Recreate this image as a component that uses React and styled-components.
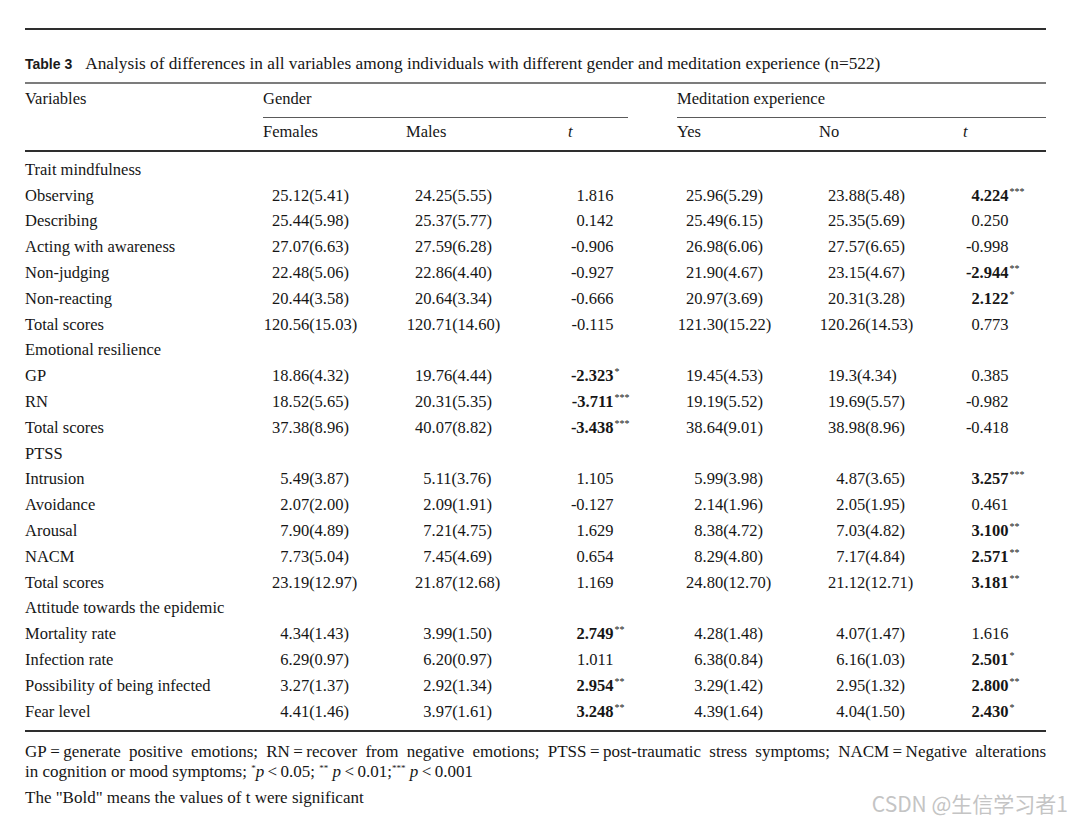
import React from 'react';
import styled, { createGlobalStyle } from 'styled-components';

const GlobalStyle = createGlobalStyle`
  html, body {
    margin: 0;
    padding: 0;
    background: #ffffff;
  }
  body {
    font-family: 'Liberation Serif', 'Times New Roman', serif;
    color: #161616;
  }
`;

// 표 데이터: t 값 뒤의 * 는 유의한 값 (굵게 표시)
const sections = [
  {
    title: 'Trait mindfulness',
    rows: [
      ['Observing', '25.12(5.41)', '24.25(5.55)', '1.816', '25.96(5.29)', '23.88(5.48)', '4.224***'],
      ['Describing', '25.44(5.98)', '25.37(5.77)', '0.142', '25.49(6.15)', '25.35(5.69)', '0.250'],
      ['Acting with awareness', '27.07(6.63)', '27.59(6.28)', '-0.906', '26.98(6.06)', '27.57(6.65)', '-0.998'],
      ['Non-judging', '22.48(5.06)', '22.86(4.40)', '-0.927', '21.90(4.67)', '23.15(4.67)', '-2.944**'],
      ['Non-reacting', '20.44(3.58)', '20.64(3.34)', '-0.666', '20.97(3.69)', '20.31(3.28)', '2.122*'],
      ['Total scores', '120.56(15.03)', '120.71(14.60)', '-0.115', '121.30(15.22)', '120.26(14.53)', '0.773'],
    ],
  },
  {
    title: 'Emotional resilience',
    rows: [
      ['GP', '18.86(4.32)', '19.76(4.44)', '-2.323*', '19.45(4.53)', '19.3(4.34)', '0.385'],
      ['RN', '18.52(5.65)', '20.31(5.35)', '-3.711***', '19.19(5.52)', '19.69(5.57)', '-0.982'],
      ['Total scores', '37.38(8.96)', '40.07(8.82)', '-3.438***', '38.64(9.01)', '38.98(8.96)', '-0.418'],
    ],
  },
  {
    title: 'PTSS',
    rows: [
      ['Intrusion', '5.49(3.87)', '5.11(3.76)', '1.105', '5.99(3.98)', '4.87(3.65)', '3.257***'],
      ['Avoidance', '2.07(2.00)', '2.09(1.91)', '-0.127', '2.14(1.96)', '2.05(1.95)', '0.461'],
      ['Arousal', '7.90(4.89)', '7.21(4.75)', '1.629', '8.38(4.72)', '7.03(4.82)', '3.100**'],
      ['NACM', '7.73(5.04)', '7.45(4.69)', '0.654', '8.29(4.80)', '7.17(4.84)', '2.571**'],
      ['Total scores', '23.19(12.97)', '21.87(12.68)', '1.169', '24.80(12.70)', '21.12(12.71)', '3.181**'],
    ],
  },
  {
    title: 'Attitude towards the epidemic',
    rows: [
      ['Mortality rate', '4.34(1.43)', '3.99(1.50)', '2.749**', '4.28(1.48)', '4.07(1.47)', '1.616'],
      ['Infection rate', '6.29(0.97)', '6.20(0.97)', '1.011', '6.38(0.84)', '6.16(1.03)', '2.501*'],
      ['Possibility of being infected', '3.27(1.37)', '2.92(1.34)', '2.954**', '3.29(1.42)', '2.95(1.32)', '2.800**'],
      ['Fear level', '4.41(1.46)', '3.97(1.61)', '3.248**', '4.39(1.64)', '4.04(1.50)', '2.430*'],
    ],
  },
];

const MeanValue = ({ value }) => {
  const dot = value.indexOf('.');
  return (
    <MeanCell>
      <IntPart>{value.slice(0, dot)}</IntPart>
      {value.slice(dot)}
    </MeanCell>
  );
};

const TValue = ({ value }) => {
  const stars = (value.match(/\*+$/) || [''])[0];
  const num = value.replace(/\*+$/, '');
  return (
    <TCell>
      <TNumber $bold={stars.length > 0}>{num}</TNumber>
      {stars && <Stars>{stars}</Stars>}
    </TCell>
  );
};

const App = () => {
  return (
    <>
      <GlobalStyle />
      <Page>
        <TopRule />

        <Caption>
          <CaptionLabel>Table 3</CaptionLabel>
          <CaptionText>
            Analysis of differences in all variables among individuals with different gender and meditation
            experience (n=522)
          </CaptionText>
        </Caption>

        <HeadGrid>
          <HeadCell>Variables</HeadCell>
          <GroupCell $span={3} $trim={49}>Gender</GroupCell>
          <GroupCell $span={3}>Meditation experience</GroupCell>

          <SubCell />
          <SubCell>Females</SubCell>
          <SubCell>Males</SubCell>
          <SubCell><em>t</em></SubCell>
          <SubCell>Yes</SubCell>
          <SubCell>No</SubCell>
          <SubCell><em>t</em></SubCell>
        </HeadGrid>

        <BodyGrid>
          {sections.map((section) => (
            <React.Fragment key={section.title}>
              <SectionTitle>{section.title}</SectionTitle>
              {section.rows.map((row) => (
                <React.Fragment key={section.title + row[0]}>
                  <VarCell>{row[0]}</VarCell>
                  <MeanValue value={row[1]} />
                  <MeanValue value={row[2]} />
                  <TValue value={row[3]} />
                  <MeanValue value={row[4]} />
                  <MeanValue value={row[5]} />
                  <TValue value={row[6]} />
                </React.Fragment>
              ))}
            </React.Fragment>
          ))}
        </BodyGrid>

        <Footnote>
          <JustifiedLine>
            GP{'\u2009'}={'\u2009'}generate positive emotions; RN{'\u2009'}={'\u2009'}recover from negative emotions;
            PTSS{'\u2009'}={'\u2009'}post-traumatic stress symptoms; NACM{'\u2009'}={'\u2009'}Negative alterations
          </JustifiedLine>
          <NoteLine>
            in cognition or mood symptoms; <NoteStar>*</NoteStar><em>p</em>{'\u2009'}&lt;{'\u2009'}0.05;{' '}
            <NoteStar>**</NoteStar> <em>p</em>{'\u2009'}&lt;{'\u2009'}0.01;<NoteStar>***</NoteStar>{' '}
            <em>p</em>{'\u2009'}&lt;{'\u2009'}0.001
          </NoteLine>
          <BoldNote>The "Bold" means the values of t were significant</BoldNote>
        </Footnote>

        <Watermark>CSDN @生信学习者1</Watermark>
      </Page>
    </>
  );
};

export default App;

// 스타일 컴포넌트
const COLUMNS = '238px 143px 162px 109px 142px 144px 83px';

const Page = styled.div`
  position: relative;
  width: 1072px;
  height: 822px;
  padding: 28px 26px 0 25px;
  box-sizing: border-box;
  overflow: hidden;
  font-size: 16.5px;
`;

const TopRule = styled.div`
  height: 2px;
  background: #2e2e2e;
`;

const Caption = styled.div`
  display: flex;
  align-items: baseline;
  gap: 13px;
  margin: 24px 0 8px;
  line-height: 20px;
`;

const CaptionLabel = styled.span`
  font-family: 'Liberation Sans', Arial, sans-serif;
  font-weight: bold;
  font-size: 14px;
  color: #1b1b1b;
`;

const CaptionText = styled.span`
  font-size: 17.3px;
  white-space: nowrap;
`;

const HeadGrid = styled.div`
  display: grid;
  grid-template-columns: ${COLUMNS};
  border-top: 2px solid #7c7c7c;
  border-bottom: 2px solid #2e2e2e;
  line-height: 20px;
`;

const HeadCell = styled.div`
  padding: 5px 0 8px;
`;

const GroupCell = styled.div`
  grid-column: span ${(p) => p.$span};
  margin-right: ${(p) => p.$trim || 0}px;
  padding: 5px 0 8px;
  border-bottom: 1px solid #5a5a5a;
`;

const SubCell = styled.div`
  padding: 4px 0 8px;

  em {
    font-style: italic;
  }
`;

const BodyGrid = styled.div`
  display: grid;
  grid-template-columns: ${COLUMNS};
  grid-auto-rows: 25.8px;
  align-items: center;
  padding: 5px 0;
  border-bottom: 2px solid #2e2e2e;
  line-height: 20px;
`;

const SectionTitle = styled.div`
  grid-column: 1 / -1;
`;

const VarCell = styled.div`
  white-space: nowrap;
`;

const MeanCell = styled.div`
  white-space: nowrap;
`;

const IntPart = styled.span`
  display: inline-block;
  width: 25.5px;
  text-align: right;
`;

const TCell = styled.div`
  white-space: nowrap;
`;

const TNumber = styled.span`
  display: inline-block;
  width: 45.5px;
  text-align: right;
  font-weight: ${(p) => (p.$bold ? 'bold' : 'normal')};
`;

const Stars = styled.span`
  font-size: 10px;
  line-height: 0;
  vertical-align: 6px;
  margin-left: 1px;
`;

const Footnote = styled.div`
  margin-top: 10px;
  font-size: 17px;
  line-height: 20px;
`;

const JustifiedLine = styled.div`
  text-align: justify;
  text-align-last: justify;
`;

const NoteLine = styled.div`
  em {
    font-style: italic;
  }
`;

const NoteStar = styled.sup`
  font-size: 9px;
  line-height: 0;
  vertical-align: 6px;
`;

const BoldNote = styled.div`
  margin-top: 6px;
`;

const Watermark = styled.div`
  position: absolute;
  right: 4px;
  top: 790px;
  font-family: 'Noto Sans CJK SC', 'Noto Sans', sans-serif;
  font-size: 21px;
  line-height: 26px;
  color: #c4c4c4;
  white-space: nowrap;
`;
